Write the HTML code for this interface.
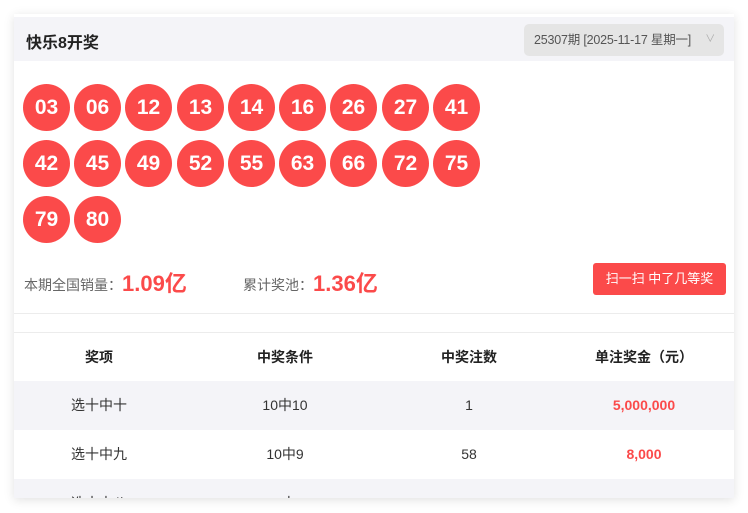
<!DOCTYPE html>
<html><head><meta charset="utf-8"><style>
*{margin:0;padding:0;box-sizing:border-box}
body{width:748px;height:513px;background:#fff;font-family:"Liberation Sans","Noto Sans CJK SC",sans-serif;position:relative;overflow:hidden}
.card{position:absolute;left:14px;top:14px;width:720px;height:484px;background:#fff;box-shadow:0 2px 10px rgba(0,0,0,.12);overflow:hidden}
.hd{position:absolute;left:0;top:3px;width:720px;height:44px;background:#f4f4f8}
.hd .t{position:absolute;left:12px;top:12px;font-size:16px;font-weight:bold;color:#222}
.sel{position:absolute;left:510px;top:7px;width:200px;height:32px;background:#e5e5e5;border-radius:5px;font-size:12.5px;color:#555;line-height:32px;padding-left:10px;letter-spacing:-0.2px}
.sel span{position:absolute;right:9px;top:0;color:#aaa;font-size:10px}
.ball{position:absolute;width:47px;height:47px;border-radius:50%;background:#fb4a4a;color:#fff;font-weight:bold;font-size:21px;text-align:center;line-height:47px}
.st{position:absolute;top:252px;font-size:14px;color:#666}
.st b{color:#fb4a4a;font-size:22px;vertical-align:-1px}
.btn{position:absolute;left:579px;top:249px;width:133px;height:32px;background:#fb4a4a;border-radius:3px;color:#fff;font-size:13px;text-align:center;line-height:32px}
.ln{position:absolute;left:0;width:720px;height:1px;background:#ececec}
.row{position:absolute;left:0;width:720px;height:49px;font-size:14px;color:#333;line-height:49px}
.row div{position:absolute;text-align:center;top:0}
.g{background:#f4f4f8}
.r{color:#fb4a4a;font-weight:bold}
</style></head><body>
<div class="card">
<div class="hd"><div class="t">快乐8开奖</div><div class="sel">25307期 [2025-11-17 星期一]<span>∨</span></div></div>
<div class="ball" style="left:9px;top:70px">03</div>
<div class="ball" style="left:60px;top:70px">06</div>
<div class="ball" style="left:111px;top:70px">12</div>
<div class="ball" style="left:163px;top:70px">13</div>
<div class="ball" style="left:214px;top:70px">14</div>
<div class="ball" style="left:265px;top:70px">16</div>
<div class="ball" style="left:316px;top:70px">26</div>
<div class="ball" style="left:368px;top:70px">27</div>
<div class="ball" style="left:419px;top:70px">41</div>
<div class="ball" style="left:9px;top:126px">42</div>
<div class="ball" style="left:60px;top:126px">45</div>
<div class="ball" style="left:111px;top:126px">49</div>
<div class="ball" style="left:163px;top:126px">52</div>
<div class="ball" style="left:214px;top:126px">55</div>
<div class="ball" style="left:265px;top:126px">63</div>
<div class="ball" style="left:316px;top:126px">66</div>
<div class="ball" style="left:368px;top:126px">72</div>
<div class="ball" style="left:419px;top:126px">75</div>
<div class="ball" style="left:9px;top:182px">79</div>
<div class="ball" style="left:60px;top:182px">80</div>
<div class="st" style="left:10px">本期全国销量：<b>1.09亿</b></div>
<div class="st" style="left:229px">累计奖池：<b>1.36亿</b></div>
<div class="btn">扫一扫 中了几等奖</div>
<div class="ln" style="top:299px"></div>
<div class="ln" style="top:318px"></div>
<div class="row" style="top:319px;font-weight:bold;color:#222"><div style="left:0;width:170px">奖项</div><div style="left:181px;width:180px">中奖条件</div><div style="left:365px;width:180px">中奖注数</div><div style="left:540px;width:180px">单注奖金（元）</div></div>
<div class="row g" style="top:367px"><div style="left:0;width:170px">选十中十</div><div style="left:181px;width:180px">10中10</div><div style="left:365px;width:180px">1</div><div style="left:540px;width:180px" class="r">5,000,000</div></div>
<div class="row" style="top:416px"><div style="left:0;width:170px">选十中九</div><div style="left:181px;width:180px">10中9</div><div style="left:365px;width:180px">58</div><div style="left:540px;width:180px" class="r">8,000</div></div>
<div class="row g" style="top:465px"><div style="left:0;width:170px">选十中八</div><div style="left:181px;width:180px">10中8</div><div style="left:365px;width:180px">893</div><div style="left:540px;width:180px" class="r">800</div></div>
</div>
</body></html>
